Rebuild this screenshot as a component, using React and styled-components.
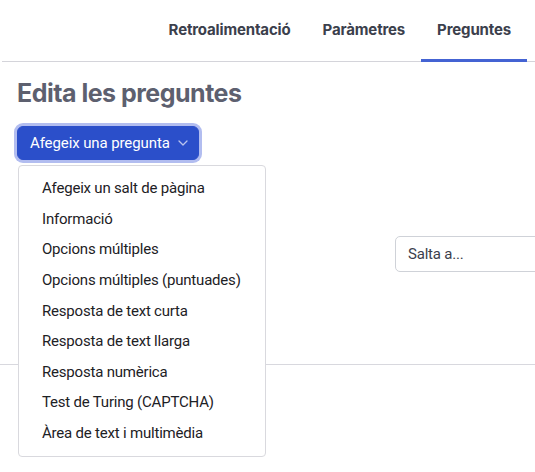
import React from 'react';
import styled, { createGlobalStyle } from 'styled-components';

const GlobalStyle = createGlobalStyle`
  body {
    margin: 0;
    font-family: Inter, "Liberation Sans", sans-serif;
    color: #1d2125;
    background: #fff;
    overflow: hidden;
  }
  * { box-sizing: border-box; }
`;

const Page = styled.div`
  width: 535px;
  height: 472px;
  overflow: hidden;
`;

const Tabs = styled.nav`
  display: flex;
  justify-content: flex-end;
  height: 62px;
  margin-left: 2px;
  padding-right: 8px;
  border-bottom: 1px solid #d4d4da;
`;

const Tab = styled.a`
  display: flex;
  align-items: center;
  padding: 0 16px;
  margin-bottom: -1px;
  font-size: 15px;
  font-weight: 700;
  letter-spacing: -0.15px;
  color: #3b404c;
  text-decoration: none;
  border-bottom: 3px solid ${p => (p.$active ? '#4463d3' : 'transparent')};
`;

const Main = styled.main`
  padding: 16px 17px 0;
`;

const Heading = styled.h2`
  margin: 0;
  font-size: 25px;
  line-height: 30px;
  font-weight: 700;
  letter-spacing: -0.5px;
  color: #5d606f;
`;

const Dropdown = styled.div`
  position: relative;
  display: inline-block;
  margin-top: 18px;
`;

const AddButton = styled.button`
  display: flex;
  align-items: center;
  gap: 8px;
  height: 34px;
  padding: 0 10px 0 12px;
  border: 1px solid #2b4fca;
  border-radius: 6px;
  background: #2b4fca;
  color: #fff;
  font-family: Roboto, "Liberation Sans", sans-serif;
  font-size: 15px;
  letter-spacing: -0.1px;
  box-shadow: 0 0 0 3px #b2bdf0;
`;

const Menu = styled.ul`
  position: absolute;
  top: calc(100% + 5px);
  left: 1px;
  width: 248px;
  margin: 0;
  padding: 7px 0 8px;
  list-style: none;
  background: #fff;
  border: 1px solid #d9d9de;
  border-radius: 4px;
  z-index: 2;
`;

const MenuItem = styled.li`
  height: 30.6px;
  display: flex;
  align-items: center;
  padding: 0 23px;
  white-space: nowrap;
  font-family: Roboto, "Liberation Sans", sans-serif;
  font-size: 15px;
  letter-spacing: -0.2px;
  color: #1d2125;
`;

const JumpRow = styled.div`
  display: flex;
  justify-content: flex-end;
  margin-top: 76px;
  margin-right: -37px;
`;

const JumpSelect = styled.div`
  width: 160px;
  height: 36px;
  display: flex;
  align-items: center;
  padding: 0 12px;
  border: 1px solid #cfd2d8;
  border-radius: 5px;
  font-family: Roboto, "Liberation Sans", sans-serif;
  font-size: 15px;
  letter-spacing: -0.2px;
  color: #3b404c;
`;

const Divider = styled.hr`
  margin: 92px -17px 0;
  border: 0;
  border-top: 1px solid #d8d8de;
`;

const Chevron = () => (
  <svg width="10" height="6" viewBox="0 0 10 6" fill="none">
    <path d="M1 1l4 4 4-4" stroke="#b9c3ee" strokeWidth="1.3" strokeLinecap="round" strokeLinejoin="round" />
  </svg>
);

const items = [
  'Afegeix un salt de pàgina',
  'Informació',
  'Opcions múltiples',
  'Opcions múltiples (puntuades)',
  'Resposta de text curta',
  'Resposta de text llarga',
  'Resposta numèrica',
  'Test de Turing (CAPTCHA)',
  'Àrea de text i multimèdia',
];

export default function App() {
  return (
    <Page>
      <GlobalStyle />
      <Tabs>
        <Tab>Retroalimentació</Tab>
        <Tab>Paràmetres</Tab>
        <Tab $active>Preguntes</Tab>
      </Tabs>
      <Main>
        <Heading>Edita les preguntes</Heading>
        <Dropdown>
          <AddButton>
            Afegeix una pregunta <Chevron />
          </AddButton>
          <Menu>
            {items.map(item => (
              <MenuItem key={item}>{item}</MenuItem>
            ))}
          </Menu>
        </Dropdown>
        <JumpRow>
          <JumpSelect>Salta a...</JumpSelect>
        </JumpRow>
        <Divider />
      </Main>
    </Page>
  );
}
